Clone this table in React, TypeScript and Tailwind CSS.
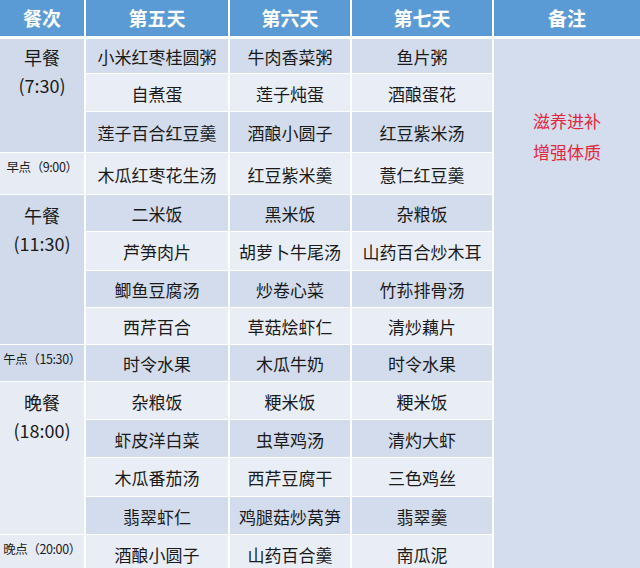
const days = ["第五天", "第六天", "第七天"];

const rows: string[][] = [
  ["小米红枣桂圆粥", "牛肉香菜粥", "鱼片粥"],
  ["自煮蛋", "莲子炖蛋", "酒酿蛋花"],
  ["莲子百合红豆羹", "酒酿小圆子", "红豆紫米汤"],
  ["木瓜红枣花生汤", "红豆紫米羹", "薏仁红豆羹"],
  ["二米饭", "黑米饭", "杂粮饭"],
  ["芦笋肉片", "胡萝卜牛尾汤", "山药百合炒木耳"],
  ["鲫鱼豆腐汤", "炒卷心菜", "竹荪排骨汤"],
  ["西芹百合", "草菇烩虾仁", "清炒藕片"],
  ["时令水果", "木瓜牛奶", "时令水果"],
  ["杂粮饭", "粳米饭", "粳米饭"],
  ["虾皮洋白菜", "虫草鸡汤", "清灼大虾"],
  ["木瓜番茄汤", "西芹豆腐干", "三色鸡丝"],
  ["翡翠虾仁", "鸡腿菇炒莴笋", "翡翠羹"],
  ["酒酿小圆子", "山药百合羹", "南瓜泥"],
];

// first-column label that opens a given row
const labels: Record<number, { kind: "meal" | "snack"; text: string[]; dark: boolean }> = {
  0: { kind: "meal", text: ["早餐", "(7:30)"], dark: true },
  3: { kind: "snack", text: ["早点（9:00）"], dark: false },
  4: { kind: "meal", text: ["午餐", "(11:30)"], dark: true },
  8: { kind: "snack", text: ["午点（15:30）"], dark: true },
  9: { kind: "meal", text: ["晚餐", "(18:00)"], dark: false },
  13: { kind: "snack", text: ["晚点（20:00）"], dark: false },
};

const font = { fontFamily: '"Noto Sans CJK SC", "Noto Sans", sans-serif' };

export default function App() {
  return (
    <div className="w-[640px] h-[568px] overflow-hidden bg-white text-[#1a1a1a]" style={font}>
      <div className="grid grid-cols-[84px_142px_120px_140px_1fr] gap-x-[2px] h-[36px] mb-[3px]">
        <div className="bg-[#5b9bd5] flex items-center justify-center text-white font-bold text-[19px]">餐次</div>
        {days.map((d) => (
          <div key={d} className="bg-[#5b9bd5] flex items-center justify-center text-white font-bold text-[19px]">
            {d}
          </div>
        ))}
        <div className="bg-[#5b9bd5] flex items-center justify-center text-white font-bold text-[19px]">备注</div>
      </div>

      <div className="grid grid-cols-[84px_142px_120px_140px_1fr] grid-rows-[34px_37px_40px_41px_36px_38px_36px_36px_36px_37px_37px_38px_37px_37px] gap-x-[2px] gap-y-px bg-white">
        {rows.map((row, i) => {
          const label = labels[i];
          const dark = i % 2 === 0;
          const cellBg = dark ? "bg-[#d3dcec]" : "bg-[#e9eef6]";
          return [
            label && label.kind === "meal" ? (
              <div
                key={`l${i}`}
                className={`${i === 0 ? "row-span-3 pt-[4px]" : "row-span-4 pt-[6px]"} ${
                  label.dark ? "bg-[#d0daeb]" : "bg-[#e6ebf4]"
                } flex flex-col items-center text-[18px] leading-[28px]`}
              >
                {label.text.map((t) => (
                  <span key={t}>{t}</span>
                ))}
              </div>
            ) : null,
            label && label.kind === "snack" ? (
              <div
                key={`l${i}`}
                className={`${label.dark ? "bg-[#d0daeb]" : "bg-[#e6ebf4]"} flex justify-center pt-[6px] text-[12.5px] leading-[16px] whitespace-nowrap tracking-[-0.4px]`}
              >
                {label.text[0]}
              </div>
            ) : null,
            ...row.map((dish, j) => (
              <div key={`${i}-${j}`} className={`${cellBg} flex items-center justify-center pt-[2px] text-[17px] whitespace-nowrap`}>
                {dish}
              </div>
            )),
            i === 0 ? (
              <div
                key="note"
                className="row-span-14 bg-[#d4ddee] flex flex-col items-center pt-[66px] text-[17px] leading-[31px] text-[#e0283a]"
              >
                <span>滋养进补</span>
                <span>增强体质</span>
              </div>
            ) : null,
          ];
        })}
      </div>
    </div>
  );
}
